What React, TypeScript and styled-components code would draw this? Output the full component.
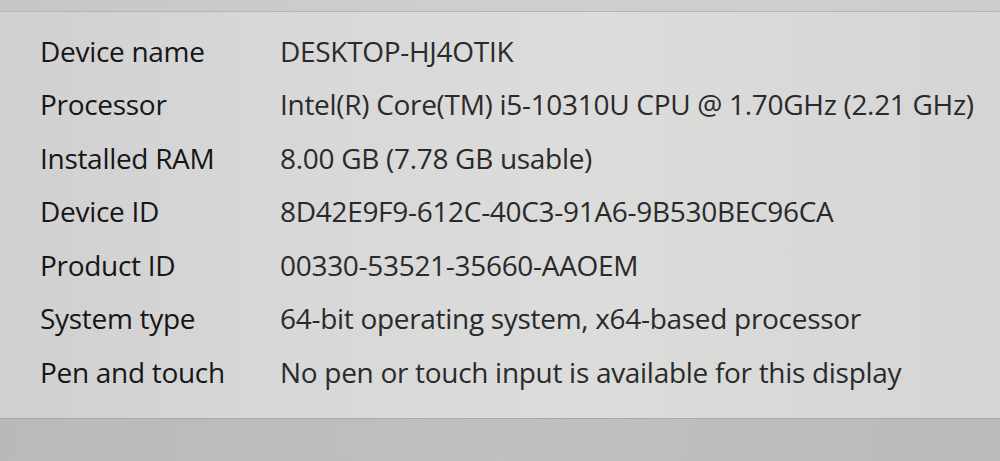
import React from 'react';
import styled, { createGlobalStyle } from 'styled-components';

const specs = [
	{ label: 'Device name', value: 'DESKTOP-HJ4OTIK' },
	{ label: 'Processor', value: 'Intel(R) Core(TM) i5-10310U CPU @ 1.70GHz (2.21 GHz)' },
	{ label: 'Installed RAM', value: '8.00 GB (7.78 GB usable)' },
	{ label: 'Device ID', value: '8D42E9F9-612C-40C3-91A6-9B530BEC96CA' },
	{ label: 'Product ID', value: '00330-53521-35660-AAOEM' },
	{ label: 'System type', value: '64-bit operating system, x64-based processor' },
	{ label: 'Pen and touch', value: 'No pen or touch input is available for this display' },
];

const GlobalStyle = createGlobalStyle`
	html, body {
		margin: 0;
		padding: 0;
		background: #c9c8ca;
	}
	body {
		font-family: 'Open Sans', 'Noto Sans', sans-serif;
	}
`;

export default function App() {
	return (
		<>
			<GlobalStyle />
			<Screen>
				<TopStrip />
				<SpecsCard>
					<SpecsGrid>
						{specs.map((spec) => (
							<React.Fragment key={spec.label}>
								<Label>{spec.label}</Label>
								<Value>{spec.value}</Value>
							</React.Fragment>
						))}
					</SpecsGrid>
				</SpecsCard>
				<BottomStrip />
			</Screen>
		</>
	);
}

const Screen = styled.div`
	width: 1000px;
	height: 461px;
	overflow: hidden;
	display: flex;
	flex-direction: column;
	background: #c4c2c4;
`;

const TopStrip = styled.div`
	height: 11px;
	background: linear-gradient(90deg, #c6c6c8 0%, #cfcfd0 50%, #cdcdce 100%);
	border-bottom: 1px solid #b5b5b7;
`;

const SpecsCard = styled.div`
	height: 407px;
	background: linear-gradient(
		90deg,
		#d0d0d0 0%,
		#d8d8d8 30%,
		#dcdcdb 60%,
		#d5d5d5 100%
	);
	border-bottom: 1px solid #a9a8aa;
	padding: 12px 0 0 40px;
	box-sizing: border-box;
`;

const SpecsGrid = styled.div`
	display: grid;
	grid-template-columns: 240px 1fr;
	grid-auto-rows: 53.5px;
	align-items: center;
`;

const Label = styled.div`
	font-size: 28px;
	color: #161617;
	white-space: nowrap;
	letter-spacing: -0.3px;
`;

const Value = styled.div`
	font-size: 28px;
	color: #2a2a2c;
	white-space: nowrap;
	letter-spacing: -0.3px;
`;

const BottomStrip = styled.div`
	flex: 1;
	background: linear-gradient(90deg, #bab8ba 0%, #c1bfc1 50%, #bbb9bb 100%);
`;
